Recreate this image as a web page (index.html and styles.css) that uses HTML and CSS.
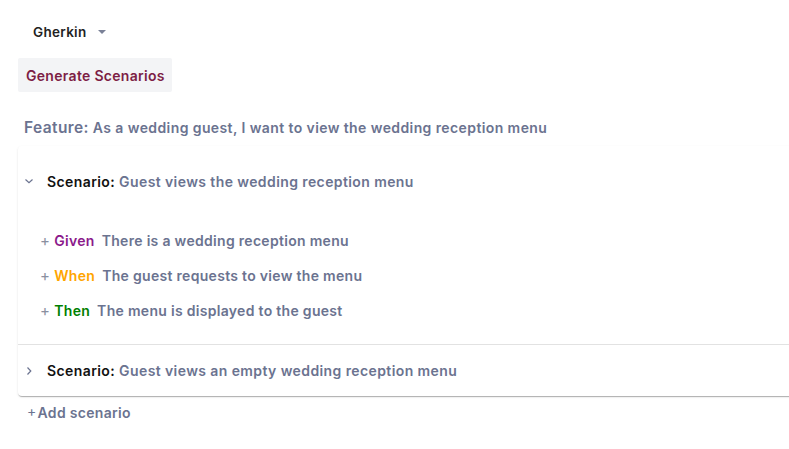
FILE: index.html
```html
<!DOCTYPE html>
<html>
<head>
<meta charset="utf-8">
<link rel="stylesheet" href="styles.css">
</head>
<body>
<div class="page">
  <div class="select">
    <span class="select-label">Gherkin</span>
    <span class="caret"></span>
  </div>
  <button class="gen-btn">Generate Scenarios</button>
  <div class="feature"><span class="feature-key">Feature:</span> As a wedding guest, I want to view the wedding reception menu</div>
  <div class="card">
    <div class="acc">
      <div class="acc-summary">
        <svg class="chev" width="10" height="10" viewBox="0 0 10 10"><path d="M1.5 3.5 L5 6.8 L8.5 3.5" fill="none" stroke="#6b7390" stroke-width="1.2"/></svg>
        <span class="sc-key">Scenario:</span><span class="sc-title">Guest views the wedding reception menu</span>
      </div>
      <div class="steps">
        <div class="step"><span class="plus">+</span><span class="kw given">Given</span><span class="st">There is a wedding reception menu</span></div>
        <div class="step"><span class="plus">+</span><span class="kw when">When</span><span class="st">The guest requests to view the menu</span></div>
        <div class="step"><span class="plus">+</span><span class="kw then">Then</span><span class="st">The menu is displayed to the guest</span></div>
      </div>
    </div>
    <div class="acc collapsed">
      <div class="acc-summary">
        <svg class="chev" width="10" height="10" viewBox="0 0 10 10"><path d="M3.5 1.5 L6.8 5 L3.5 8.5" fill="none" stroke="#6b7390" stroke-width="1.2"/></svg>
        <span class="sc-key">Scenario:</span><span class="sc-title">Guest views an empty wedding reception menu</span>
      </div>
    </div>
  </div>
  <div class="add"><span class="add-plus">+</span>Add scenario</div>
</div>
</body>
</html>
```
FILE: styles.css
```css
html, body {
  margin: 0;
  padding: 0;
  background: #ffffff;
}
body {
  font-family: "Inter", "Noto Sans", sans-serif;
  font-weight: 600;
  font-size: 14px;
  color: #6b7390;
  overflow: hidden;
}
.page {
  padding: 20px 0 0 18px;
  width: 820px;
}
.select {
  display: flex;
  align-items: center;
  height: 24px;
  padding-left: 15px;
}
.select-label {
  color: #222222;
  font-size: 13.5px;
  letter-spacing: 0.3px;
}
.caret {
  margin-left: 11px;
  width: 0;
  height: 0;
  border-left: 4px solid transparent;
  border-right: 4px solid transparent;
  border-top: 4px solid #7a8197;
}
.gen-btn {
  margin-top: 14px;
  display: block;
  border: none;
  background: #f3f4f6;
  color: #7d1e45;
  font-family: inherit;
  font-weight: 600;
  font-size: 14px;
  letter-spacing: 0.3px;
  height: 34px;
  padding: 0 7px 0 8px;
  border-radius: 2px;
}
.feature {
  margin-top: 26px;
  padding-left: 6px;
  font-size: 14px;
  letter-spacing: 0.4px;
  height: 20px;
  line-height: 20px;
}
.feature-key {
  font-size: 15.5px;
}
.card {
  margin-top: 8px;
  background: #fff;
  border-radius: 4px 0 0 4px;
  box-shadow: 0 2px 1px -1px rgba(0,0,0,0.2), 0 1px 1px 0 rgba(0,0,0,0.1), 0 1px 3px 0 rgba(0,0,0,0.08);
}
.acc + .acc {
  border-top: 1px solid #e2e2e2;
}
.acc-summary {
  display: flex;
  align-items: center;
  height: 52px;
  padding: 0 0 0 6px;
  letter-spacing: 0.4px;
}
.acc:first-child .acc-summary {
  height: 70px;
}
.acc.collapsed .acc-summary {
  height: 51px;
}
.chev {
  margin-right: 13px;
}
.sc-key {
  color: #111111;
  margin-right: 4px;
}
.steps {
  padding: 7px 0 16px 22px;
}
.step {
  height: 35px;
  display: flex;
  align-items: center;
  letter-spacing: 0.3px;
}
.plus {
  font-weight: 400;
  color: #8a8fa0;
  font-size: 15px;
  margin-right: 4px;
}
.kw {
  margin-right: 7px;
}
.given { color: #8b1a8b; }
.when { color: #ffa500; }
.then { color: #008000; }
.add {
  margin-top: 8px;
  padding-left: 9px;
  letter-spacing: 0.3px;
  display: flex;
  align-items: center;
}
.add-plus {
  font-weight: 400;
  font-size: 14px;
  margin-right: 1px;
  position: relative;
  top: -2px;
}
```
